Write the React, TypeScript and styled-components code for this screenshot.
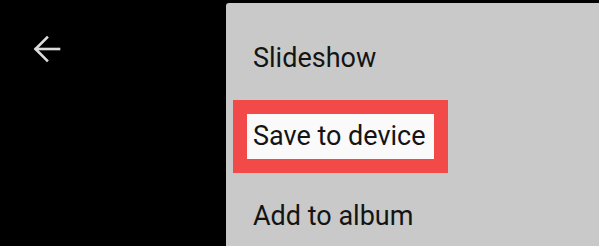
import React from "react";
import styled, { createGlobalStyle } from "styled-components";

const Global = createGlobalStyle`
  html, body { margin: 0; padding: 0; background: #000; }
  body { font-family: Roboto, "Noto Sans", sans-serif; }
`;

const Screen = styled.div`
  width: 599px;
  height: 246px;
  background: #000;
  display: flex;
  overflow: hidden;
`;

const Toolbar = styled.div`
  width: 226px;
  flex-shrink: 0;
  padding: 34px 0 0 32px;
  box-sizing: border-box;
`;

const BackButton = styled.button`
  background: none;
  border: none;
  padding: 0;
  width: 30px;
  height: 30px;
  display: flex;
  align-items: center;
  justify-content: center;
  color: #dcdcdc;
`;

const Menu = styled.div`
  flex: 1;
  margin-top: 3px;
  background: #c9c9c9;
  border-top-left-radius: 3px;
  padding-top: 15px;
  display: flex;
  flex-direction: column;
`;

const Item = styled.div`
  height: 79px;
  flex-shrink: 0;
  display: flex;
  align-items: center;
  padding-left: 27px;
  font-size: 27px;
  line-height: 32px;
  color: #141414;
`;

const Highlight = styled.span<{ $on?: boolean }>`
  ${(p) =>
    p.$on
      ? `
    background: #fafafa;
    border: 14px solid #f24a48;
    padding: 6px 8px 7px 6px;
    margin-left: -20px;
  `
      : ""}
`;

const items = ["Slideshow", "Save to device", "Add to album"];

export default function App() {
  return (
    <>
      <Global />
      <Screen>
        <Toolbar>
          <BackButton aria-label="Back">
            <svg width="28" height="28" viewBox="0 0 28 28" fill="none" stroke="currentColor" strokeWidth="2.6" strokeLinecap="square">
              <path d="M26 14H3" />
              <path d="M14 2.5L2.5 14L14 25.5" />
            </svg>
          </BackButton>
        </Toolbar>
        <Menu>
          {items.map((t) => (
            <Item key={t}>
              <Highlight $on={t === "Save to device"}>{t}</Highlight>
            </Item>
          ))}
        </Menu>
      </Screen>
    </>
  );
}
